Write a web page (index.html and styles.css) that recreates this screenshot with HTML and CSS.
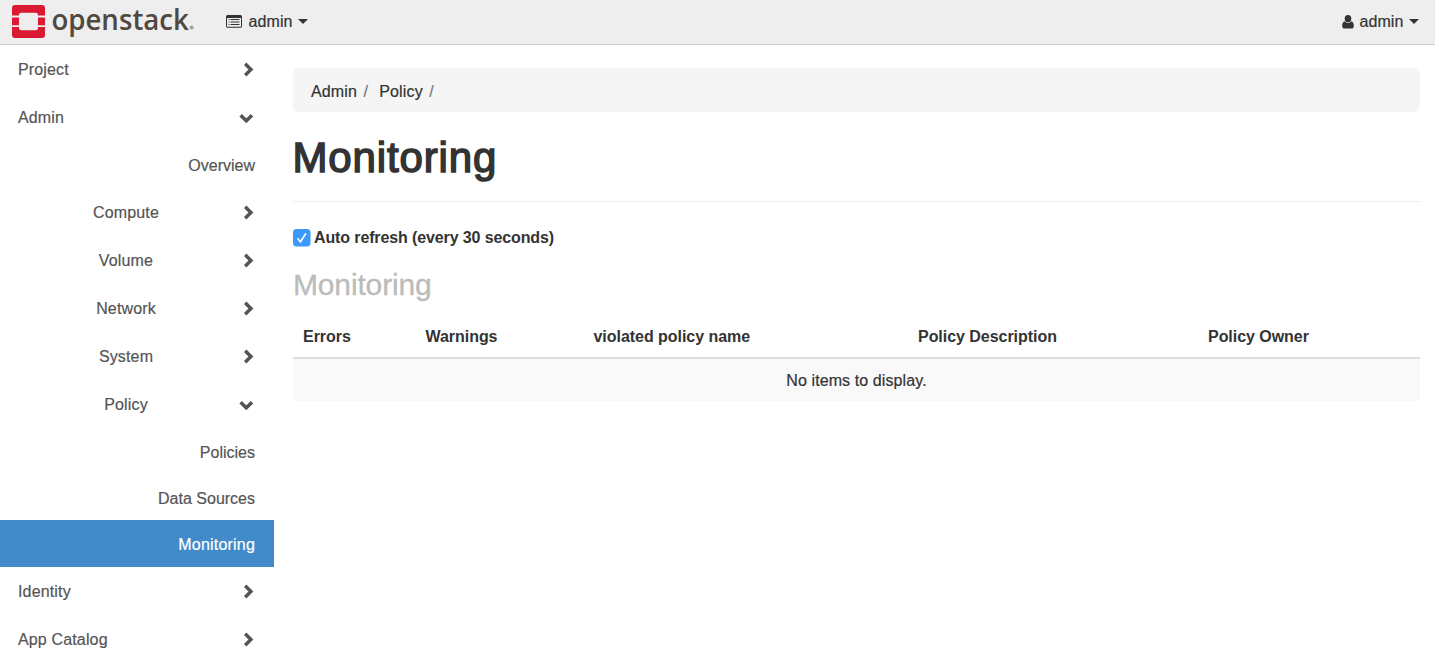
FILE: index.html
```html
<!DOCTYPE html>
<html lang="en">
<head>
<meta charset="utf-8">
<title>Monitoring - OpenStack Dashboard</title>
<link rel="stylesheet" href="styles.css">
</head>
<body>
<svg class="defs" aria-hidden="true">
  <symbol id="right" viewBox="0 0 16 16"><path d="M6.200 1.800 11.900 7.500l-5.700 5.700" fill="none" stroke="currentColor" stroke-width="3.500"/></symbol>
  <symbol id="down" viewBox="0 0 16 16"><path d="M1.600 5.300 7.300 10.800l5.700-5.500" fill="none" stroke="currentColor" stroke-width="3.600"/></symbol>
</svg>
<header class="topbar">
  <a class="brand">
    <svg width="186" height="44" viewBox="0 0 186 44">
      <path fill="#da1a32" d="M3 5h27a3 3 0 0 1 3 3v7.500h-7V15a2.200 2.200 0 0 0-2.200-2.200H9.200A2.200 2.200 0 0 0 7 15v.5H0V8a3 3 0 0 1 3-3zM0 17.500h7v7.700H0zM26 17.500h7v7.700h-7zM0 27.100h7v.9a2.200 2.200 0 0 0 2.200 2.200h14.600A2.200 2.200 0 0 0 26 28v-.9h7V35a3 3 0 0 1-3 3H3a3 3 0 0 1-3-3z"/>
      <text class="wordmark" x="39.400" y="29.500" textLength="137.500" lengthAdjust="spacingAndGlyphs">openstack</text>
      <circle cx="179.700" cy="27.500" r="1.900" fill="#a39e99"/>
    </svg>
  </a>
  <a class="menu">
    <svg width="17" height="14" viewBox="0 0 17 14"><path fill="#333" fill-rule="evenodd" d="M1.500 0h13A1.500 1.500 0 0 1 16 1.500v9.800a1.500 1.500 0 0 1-1.500 1.500h-13A1.500 1.500 0 0 1 0 11.300V1.500A1.500 1.500 0 0 1 1.500 0zM1 3v8.300q0 .5.5.5h13q.5 0 .5-.5V3z"/><path stroke="#333" stroke-width="1" d="M2.500 4.500h1M4.500 4.500h9M2.500 7h1M4.500 7h9M2.500 9.500h1M4.500 9.500h9"/></svg>
    <span>admin</span><i class="caret"></i>
  </a>
  <a class="menu user">
    <svg width="12" height="14" viewBox="0 0 12 14"><ellipse cx="6" cy="3.700" rx="3.300" ry="3.600" fill="#333"/><path fill="#333" d="M2.500 6.300C.8 6.800.2 8.800.2 11c0 1.700 1 2.600 2.300 2.600h7c1.300 0 2.300-.9 2.300-2.600 0-2.200-.6-4.200-2.300-4.700-2 2.200-5 2.200-7 0z"/></svg>
    <span>admin</span><i class="caret"></i>
  </a>
</header>
<div class="layout">
  <nav class="sidebar">
    <a class="item"><span>Project</span><svg><use href="#right"/></svg></a>
    <a class="item"><span>Admin</span><svg><use href="#down"/></svg></a>
    <a class="item leaf overview">Overview</a>
    <a class="item group"><span>Compute</span><svg><use href="#right"/></svg></a>
    <a class="item group"><span>Volume</span><svg><use href="#right"/></svg></a>
    <a class="item group"><span>Network</span><svg><use href="#right"/></svg></a>
    <a class="item group"><span>System</span><svg><use href="#right"/></svg></a>
    <a class="item group"><span>Policy</span><svg><use href="#down"/></svg></a>
    <a class="item leaf">Policies</a>
    <a class="item leaf">Data Sources</a>
    <a class="item leaf active">Monitoring</a>
    <a class="item"><span>Identity</span><svg><use href="#right"/></svg></a>
    <a class="item"><span>App Catalog</span><svg><use href="#right"/></svg></a>
  </nav>
  <main class="content">
    <div class="breadcrumb"><a>Admin</a><span class="slash">/</span><a>Policy</a><span class="slash">/</span></div>
    <h1 class="title">Monitoring</h1>
    <label class="refresh">
      <svg width="18" height="18" viewBox="0 0 18 18"><rect width="17.500" height="17.500" rx="3.500" fill="#3b99fc"/><path d="m4.500 9.300 3 3.500 5.500-8.500" fill="none" stroke="#fff" stroke-width="1.600"/></svg>
      <span>Auto refresh (every 30 seconds)</span>
    </label>
    <h2 class="subtitle">Monitoring</h2>
    <table class="grid">
      <colgroup><col class="c-errors"><col class="c-warnings"><col class="c-name"><col class="c-desc"><col></colgroup>
      <thead><tr><th>Errors</th><th>Warnings</th><th>violated policy name</th><th>Policy Description</th><th>Policy Owner</th></tr></thead>
      <tbody><tr><td colspan="5">No items to display.</td></tr></tbody>
    </table>
  </main>
</div>
</body>
</html>
```
FILE: styles.css
```css
* { box-sizing: border-box; }
body {
  margin: 0;
  height: 667px;
  overflow: hidden;
  background: #fff;
  color: #333;
  font: 16px/24px "Liberation Sans", Arial, sans-serif;
}
.defs { display: none; }
.topbar {
  display: flex;
  height: 45px;
  padding: 0 16px 0 12px;
  background: #eee;
  border-bottom: 1px solid #ccc;
}
.brand { width: 214px; }
.brand svg { display: block; }
.wordmark {
  font: 600 28px "Open Sans", sans-serif;
  fill: #51483f;
}
.menu { display: flex; align-items: center; height: 43px; color: #333; -webkit-text-stroke: .2px; }
.menu span { margin-left: 5.5px; letter-spacing: .1px; }
.menu svg { margin-top: 1px; }
.user { margin-left: auto; }
.caret {
  margin-left: 5.5px;
  border: 5px solid transparent;
  border-top-color: #333;
  border-bottom: 0;
}
.layout { display: flex; }
.sidebar { width: 274px; color: #555; -webkit-text-stroke: .2px; }
.item {
  display: flex;
  align-items: center;
  justify-content: space-between;
  height: 48px;
  padding: 1px 19px 0 18px;
  letter-spacing: .15px;
}
.item svg { width: 16px; height: 16px; }
.group span { width: 216px; text-align: center; }
.leaf { justify-content: flex-end; height: 46px; padding-top: 3px; letter-spacing: 0; }
.overview { height: 47px; padding-top: 2px; }
.active {
  height: 47px;
  padding-top: 2px;
  background: #428bca;
  color: #fff;
  letter-spacing: .2px;
}
.content { flex: 1; padding: 23px 15px 0 19px; }
.breadcrumb {
  display: flex;
  height: 44px;
  padding: 12px 18px 0;
  border-radius: 5px;
  background: #f5f5f5;
  letter-spacing: .15px;
  -webkit-text-stroke: .2px;
}
.slash { padding: 0 11px 0 6.5px; color: #777; }
.title {
  height: 90px;
  margin: 0;
  padding-top: 22px;
  border-bottom: 1px solid #eee;
  font-size: 42px;
  line-height: 48px;
  font-weight: 400;
  letter-spacing: .85px;
  text-indent: -.5px;
  -webkit-text-stroke: 1.5px #333;
}
.refresh {
  display: flex;
  align-items: center;
  gap: 3px;
  height: 24px;
  margin-top: 24px;
  font-weight: 700;
  letter-spacing: -.12px;
}
.subtitle {
  margin: 17px 0 12px;
  color: #bbb;
  font-size: 30px;
  line-height: 36px;
  font-weight: 400;
  letter-spacing: -.15px;
  -webkit-text-stroke: .3px #bbb;
}
.grid { width: 100%; table-layout: fixed; border-collapse: collapse; }
.c-errors { width: 122.5px; }
.c-warnings { width: 168px; }
.c-name { width: 324.5px; }
.c-desc { width: 290px; }
.grid th {
  height: 43px;
  padding: 1px 10px 0;
  text-align: left;
  letter-spacing: -.04px;
  border-bottom: 2px solid #ddd;
}
.grid td {
  height: 43px;
  padding: 1px 0 0;
  text-align: center;
  letter-spacing: .1px;
  background: #f9f9f9;
  -webkit-text-stroke: .2px;
}
```
